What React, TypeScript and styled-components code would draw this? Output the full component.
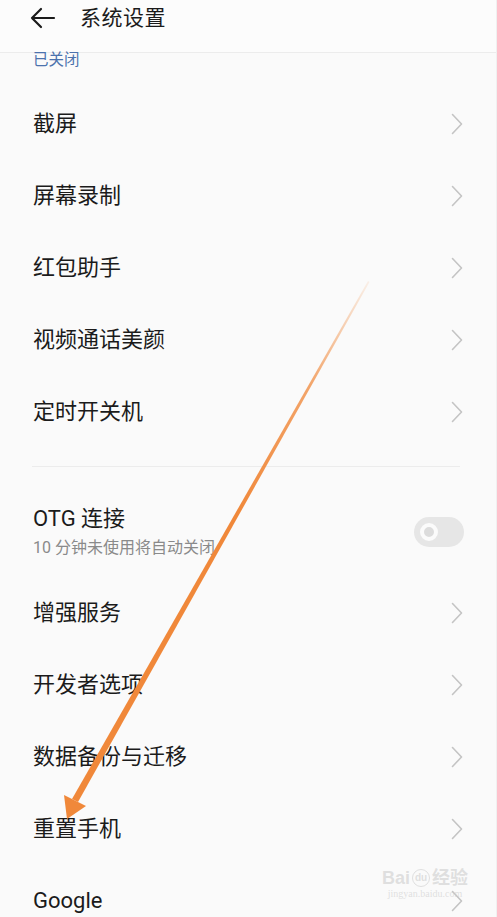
import React from 'react';
import styled, { createGlobalStyle } from 'styled-components';

const C = {
  page: '#fafafa',
  text: '#1b1b1b',
  sub: '#8a8a8a',
  blue: '#4c72ad',
  line: '#ececec',
  chevron: '#c4c4c4',
  orange: '#f0883a',
};

const GlobalStyle = createGlobalStyle`
  * { box-sizing: border-box; }
  html, body { margin: 0; padding: 0; background: ${C.page}; }
  body { font-family: Roboto, "Noto Sans CJK SC", sans-serif; color: ${C.text}; }
`;

const Screen = styled.div`
  position: relative;
  width: 497px;
  height: 917px;
  overflow: hidden;
  background: ${C.page};
  border-right: 1px solid #f0f0f0;
  margin-right: 5px;
`;

const Header = styled.div`
  height: 53px;
  display: flex;
  align-items: flex-start;
  padding: 5px 0 0 30px;
  gap: 24px;
  background: #fcfcfc;
  border-bottom: 1px solid ${C.line};
`;

const Title = styled.div`
  font-size: 21px;
  line-height: 26px;
  letter-spacing: 0.5px;
  color: ${C.text};
`;

const Status = styled.div`
  height: 35px;
  padding: 0 0 0 33px;
  font-size: 15.5px;
  line-height: 15px;
  color: ${C.blue};
`;

const List = styled.div`
  display: flex;
  flex-direction: column;
`;

const Row = styled.div<{ $tall?: boolean }>`
  height: ${p => (p.$tall ? 91 : 72)}px;
  display: flex;
  align-items: center;
  justify-content: space-between;
  padding: 0 33px 0 33px;
`;

const Texts = styled.div`
  display: flex;
  flex-direction: column;
  gap: 6px;
`;

const Label = styled.div`
  font-size: 22px;
  line-height: 26px;
  color: ${C.text};
`;

const SubLabel = styled.div`
  font-size: 16px;
  line-height: 20px;
  color: ${C.sub};
`;

const Divider = styled.div`
  height: 1px;
  margin: 18px 36px 19px 32px;
  background: ${C.line};
`;

const Toggle = styled.div`
  width: 50px;
  height: 30px;
  border-radius: 15px;
  background: #e6e6e6;
  display: flex;
  align-items: center;
  padding-left: 6px;
  margin-right: -1px;
`;

const Knob = styled.div`
  width: 18px;
  height: 18px;
  border-radius: 50%;
  border: 4px solid #fbfbfb;
  background: #dcdcdc;
`;

const Overlay = styled.svg`
  position: absolute;
  left: 0;
  top: 0;
  pointer-events: none;
`;

const Watermark = styled.div`
  position: absolute;
  left: 382px;
  top: 868px;
  display: flex;
  flex-direction: column;
  align-items: center;
  color: rgba(205, 205, 205, 0.6);
  font-family: "Liberation Sans", "Noto Sans CJK SC", sans-serif;
`;

const WmTop = styled.div`
  display: flex;
  align-items: center;
  gap: 2px;
  font-size: 18px;
  font-weight: bold;
  line-height: 20px;
`;

const WmDu = styled.span`
  font-size: 10px;
  line-height: 16px;
  width: 18px;
  height: 18px;
  border-radius: 50%;
  border: 1.5px solid rgba(205, 205, 205, 0.6);
  text-align: center;
`;

const WmBottom = styled.div`
  font-family: "Liberation Serif", serif;
  font-size: 10px;
  line-height: 12px;
`;

const Chevron = () => (
  <svg width="12" height="22" viewBox="0 0 12 22">
    <path d="M1.5 1.5 L10.5 11 L1.5 20.5" fill="none" stroke={C.chevron} strokeWidth="1.6" strokeLinecap="round" strokeLinejoin="round" />
  </svg>
);

const BackArrow = () => (
  <svg width="26" height="26" viewBox="0 0 26 26">
    <path d="M2 13 H24 M2 13 L11 4 M2 13 L11 22" fill="none" stroke={C.text} strokeWidth="2.2" strokeLinecap="round" strokeLinejoin="round" />
  </svg>
);

const first = ['截屏', '屏幕录制', '红包助手', '视频通话美颜', '定时开关机'];
const second = ['增强服务', '开发者选项', '数据备份与迁移', '重置手机', 'Google'];

export default function App() {
  return (
    <>
      <GlobalStyle />
      <Screen>
        <Header>
          <BackArrow />
          <Title>系统设置</Title>
        </Header>
        <Status>已关闭</Status>
        <List>
          {first.map(t => (
            <Row key={t}>
              <Label>{t}</Label>
              <Chevron />
            </Row>
          ))}
          <Divider />
          <Row $tall>
            <Texts>
              <Label>OTG 连接</Label>
              <SubLabel>10 分钟未使用将自动关闭</SubLabel>
            </Texts>
            <Toggle>
              <Knob />
            </Toggle>
          </Row>
          {second.map(t => (
            <Row key={t}>
              <Label>{t}</Label>
              <Chevron />
            </Row>
          ))}
        </List>

        <Overlay width="497" height="917" viewBox="0 0 497 917">
          <defs>
            <linearGradient id="shaft" x1="368" y1="282" x2="80" y2="800" gradientUnits="userSpaceOnUse">
              <stop offset="0" stopColor={C.orange} stopOpacity="0.1" />
              <stop offset="0.2" stopColor={C.orange} stopOpacity="0.75" />
              <stop offset="0.45" stopColor={C.orange} stopOpacity="1" />
              <stop offset="1" stopColor={C.orange} stopOpacity="1" />
            </linearGradient>
          </defs>
          <polygon points="368,281 369.5,282 78,802 72,799" fill="url(#shaft)" />
          <polygon points="67,819 64,795 86,806" fill={C.orange} />
        </Overlay>

        <Watermark>
          <WmTop>
            <span>Bai</span>
            <WmDu>du</WmDu>
            <span>经验</span>
          </WmTop>
          <WmBottom>jingyan.baidu.com</WmBottom>
        </Watermark>
      </Screen>
    </>
  );
}
